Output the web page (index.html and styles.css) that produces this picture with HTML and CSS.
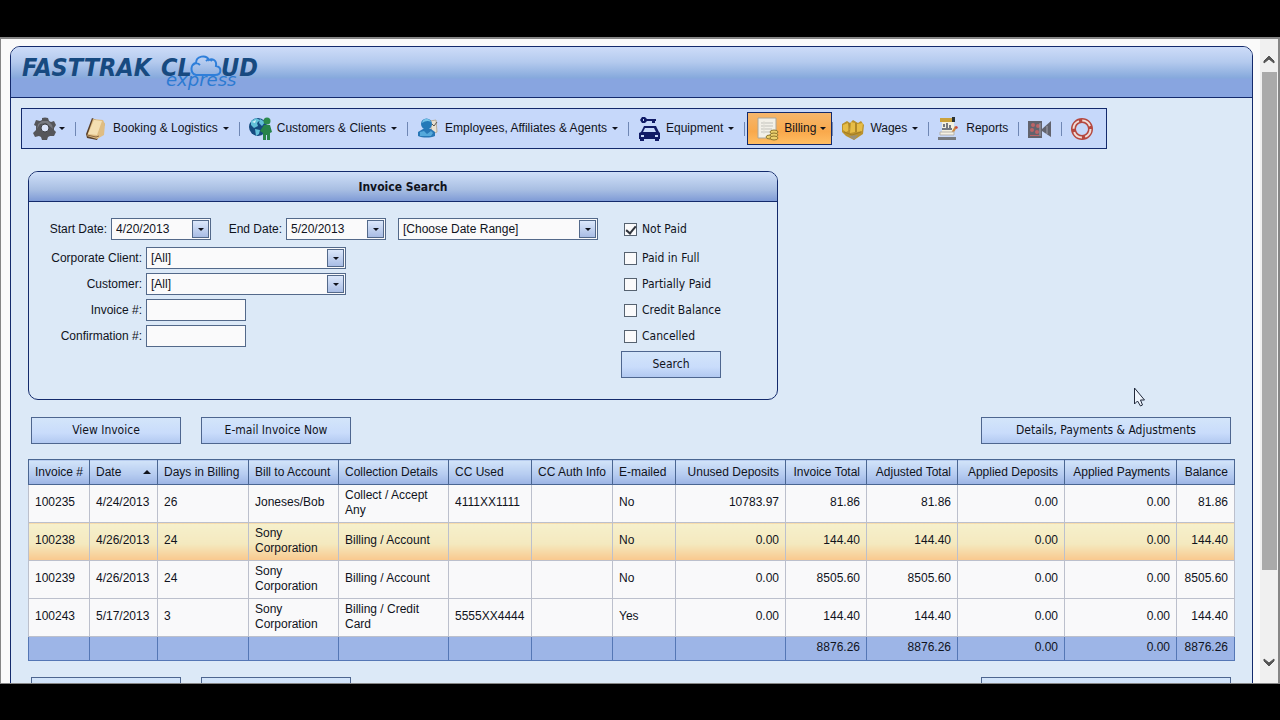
FILE: index.html
```html
<!DOCTYPE html>
<html lang="en">
<head>
<meta charset="utf-8">
<title>FastTrak Cloud Express</title>
<link rel="stylesheet" href="styles.css">
</head>
<body>
<div class="window">
<main class="viewport">
<div class="page">
<header class="banner">
<svg class="logo" width="250" height="44" viewBox="0 0 250 44" role="img" aria-label="FastTrak Cloud express">
<g class="logo-main"><text x="0" y="26">FASTTRAK</text><text x="139" y="26">CL</text><text x="199" y="26">UD</text></g>
<path class="logo-cloud" d="M177 25h16c7 0 7-8 1-9 1-6-4-8-7-6-3-6-13-4-13 3-5 0-7 10 0 12zM171 15c2-2 5-2 7 0M184 11c2-2 4-2 6 0"/>
<text class="logo-script" x="144" y="36">express</text>
</svg>
</header>
<nav class="menu">
<button class="item" aria-label="Settings"><svg class="icon" viewBox="0 0 24 24"><path fill="#55565a" d="M9 1q3-1 6 0l1 3 2 1 3-1 2 4-2 3v2l2 2-2 4-4 0-2 1-1 3H9l-1-3-2-1-4 1-2-4 3-3V9L1 8l2-5 4 1 2-1z"/><path fill="#777980" d="M9 4h6l4 4 1 4-7-6-6 1-3 5 1-5z"/><circle cx="12" cy="11" r="4" fill="#dbe4fa" stroke="#3e4044"/></svg><i class="caret"></i></button>
<button class="item"><svg class="icon" viewBox="0 0 24 24"><path fill="#59402b" d="M8 1L2 17l1 4 10 2 8-16z"/><path fill="#dfbd83" d="M9 2l10 1 2 4-1 11-7 4-10-3z"/><path fill="#f4dfb2" d="M10 3l8 1-5 14-9-1z"/><path stroke="#8d6840" fill="none" d="M3 18l9 2 3-1"/></svg><span>Booking &amp; Logistics</span><i class="caret"></i></button>
<button class="item"><svg class="icon" viewBox="0 0 24 24"><circle cx="10" cy="10" r="9" fill="#154a80"/><path fill="#62bfd8" d="M3 4l5-3 4 2-3 3 1 3-4 2-3-3zM12 2l5 3-3 4-3-3zM7 12l5 1-1 4-3 2z"/><path fill="#d5f1fa" d="M4 5l4-2-1 3z"/><circle cx="19" cy="4" r="3.500" fill="#2d8b4d"/><path fill="#27834a" d="M16 8h6l2 7-2 1v7h-3v-5h-1v5h-3v-7l-3-2z"/></svg><span>Customers &amp; Clients</span><i class="caret"></i></button>
<button class="item"><svg class="icon" viewBox="0 0 24 24"><path fill="#e8e1d2" stroke="#b8ad99" d="M14 4l6-1 1 12-5 2z"/><path stroke="#5a5752" fill="none" d="M16 7l2 2 3-4"/><path fill="#2777b6" d="M2 15l5-3h8l4 3v4c-5 2-12 2-17 0z"/><circle cx="10.500" cy="7" r="5.500" fill="#2479b8"/><path fill="#74c2e7" d="M6 6c1-6 8-5 9-1-3-2-6-1-9 1z"/><path fill="#55a9db" d="M4 15l4-1 3 3 4-3 2 2-2 3H4z"/></svg><span>Employees, Affiliates &amp; Agents</span><i class="caret"></i></button>
<button class="item"><svg class="icon" viewBox="0 0 24 24"><g fill="#101b66"><path d="M5 0h3l2 2h9v2h-1v2h-3V4h-5L8 6H5L3 3z"/><path d="M7 9h12l3 6 1 1v6h-1v2h-4v-2H7v2H3v-2H2v-6l2-1z"/></g><path fill="#c6d8fa" d="M8 11h9l2 4H6zM4 18h3v2H4zM18 18h3v2h-3zM6 2h1v2H6z"/></svg><span>Equipment</span><i class="caret"></i></button>
<button class="item active"><svg class="icon" viewBox="0 0 24 24"><path fill="#f2f0e8" stroke="#aaa69b" d="M2 1h18v20H2z"/><path stroke="#c1c1bb" d="M5 6h12M5 9h12M5 12h11M5 15h10"/><path stroke="#dfddd4" d="M8 4v13"/><g fill="#ead06c" stroke="#8f772f"><ellipse cx="14" cy="20" rx="4" ry="2"/><ellipse cx="18" cy="15" rx="4" ry="2"/><ellipse cx="18" cy="18" rx="4" ry="2"/><ellipse cx="18" cy="21" rx="4" ry="2"/></g></svg><span>Billing</span><i class="caret"></i></button>
<button class="item"><svg class="icon" viewBox="0 0 24 24"><path fill="#bb922d" d="M1 7l5-3 3 2 3-3 5 3 3-2 3 4-1 9-9 6-8-4-4-4z"/><path fill="#e7bd47" d="M2 8l5-2 2 7-4 2-3-2zM10 5l4 1v9l-5 1zM16 7l6-1-1 8-5 1z"/><path stroke="#a37d24" fill="none" d="M8 6v8M15 6v9M3 15l8 3 9-3"/><path fill="#99917a" d="M8 19l9-1-4 5z"/></svg><span>Wages</span><i class="caret"></i></button>
<button class="item"><svg class="icon" viewBox="0 0 24 24"><path fill="#f3f0df" d="M5 3h12v13H5z"/><path fill="#cba23b" d="M3 1h15v4H3z"/><path fill="#2b3335" d="M15 0h3v5h-3z"/><path stroke="#4b5263" d="M5 12h10M7 10V7M10 11V6M13 11V8" stroke-width="1.500"/><path d="M14 16l4-7 2 1-4 7-3 1z" fill="#cc873a"/><path fill="#f5f1e3" stroke="#b5b3ad" d="M3 15h14v3H3z"/><path fill="#777b80" d="M1 20h18v3H1z"/><path fill="#c8443e" d="M19 9l2 1-1 2-2-1z"/></svg><span>Reports</span></button>
<button class="item" aria-label="Video help"><svg class="icon" viewBox="0 0 24 24"><path fill="#62636d" d="M1 4h14v17H1zM15 12l9-8v16l-9-6z"/><g fill="#bc6466"><circle cx="6" cy="8" r="2"/><circle cx="11" cy="9" r="2"/><circle cx="5" cy="13" r="2"/><circle cx="10" cy="15" r="2"/><path d="M3 18h9v1H3z"/></g><path stroke="#a4a4ae" d="M13 6v13M20 9v8"/></svg></button>
<button class="item" aria-label="Help"><svg class="icon" viewBox="0 0 24 24"><circle cx="12" cy="12" r="8.500" fill="none" stroke="#b5483f" stroke-width="5"/><circle cx="12" cy="12" r="8.500" fill="none" stroke="#f0ddd8" stroke-width="2" stroke-dasharray="10 3.350"/></svg></button>
</nav>
<div class="content">
<form class="search" onsubmit="return false">
<h1>Invoice Search</h1>
<div class="search-body">
<div class="filters">
<div class="row dates">
<label for="start">Start Date:</label><div class="combo date"><input id="start" value="4/20/2013"><button class="drop" type="button" aria-label="Pick start date"></button></div>
<label for="end">End Date:</label><div class="combo date"><input id="end" value="5/20/2013"><button class="drop" type="button" aria-label="Pick end date"></button></div>
<div class="combo wide range"><select aria-label="Date range"><option>[Choose Date Range]</option></select><span class="drop"></span></div>
</div>
<div class="row"><label for="corp">Corporate Client:</label><div class="combo wide"><select id="corp"><option>[All]</option></select><span class="drop"></span></div></div>
<div class="row"><label for="cust">Customer:</label><div class="combo wide"><select id="cust"><option>[All]</option></select><span class="drop"></span></div></div>
<div class="row"><label for="inv">Invoice #:</label><div class="combo date"><input id="inv"></div></div>
<div class="row"><label for="conf">Confirmation #:</label><div class="combo date"><input id="conf"></div></div>
</div>
<div class="status">
<label class="check"><input type="checkbox" checked>Not Paid</label>
<label class="check"><input type="checkbox">Paid in Full</label>
<label class="check"><input type="checkbox">Partially Paid</label>
<label class="check"><input type="checkbox">Credit Balance</label>
<label class="check"><input type="checkbox">Cancelled</label>
<button class="btn small">Search</button>
</div>
</div>
</form>
<div class="actions"><button class="btn">View Invoice</button><button class="btn">E-mail Invoice Now</button><button class="btn large">Details, Payments &amp; Adjustments</button></div>
<table class="grid">
<colgroup><col class="w61"><col class="w68"><col class="w91"><col class="w90"><col class="w110"><col class="w83"><col class="w81"><col class="w63"><col class="w110"><col class="w81"><col class="w91"><col class="w107"><col class="w112"><col class="w58"></colgroup>
<thead><tr><th>Invoice #</th><th><span class="sorted">Date<i class="up"></i></span></th><th>Days in Billing</th><th>Bill to Account</th><th>Collection Details</th><th>CC Used</th><th>CC Auth Info</th><th>E-mailed</th><th class="num">Unused Deposits</th><th class="num">Invoice Total</th><th class="num">Adjusted Total</th><th class="num">Applied Deposits</th><th class="num">Applied Payments</th><th class="num">Balance</th></tr></thead>
<tbody>
<tr><td>100235</td><td>4/24/2013</td><td>26</td><td>Joneses/Bob</td><td>Collect / Accept Any</td><td>4111XX1111</td><td></td><td>No</td><td class="num">10783.97</td><td class="num">81.86</td><td class="num">81.86</td><td class="num">0.00</td><td class="num">0.00</td><td class="num">81.86</td></tr>
<tr class="selected"><td>100238</td><td>4/26/2013</td><td>24</td><td>Sony Corporation</td><td>Billing / Account</td><td></td><td></td><td>No</td><td class="num">0.00</td><td class="num">144.40</td><td class="num">144.40</td><td class="num">0.00</td><td class="num">0.00</td><td class="num">144.40</td></tr>
<tr><td>100239</td><td>4/26/2013</td><td>24</td><td>Sony Corporation</td><td>Billing / Account</td><td></td><td></td><td>No</td><td class="num">0.00</td><td class="num">8505.60</td><td class="num">8505.60</td><td class="num">0.00</td><td class="num">0.00</td><td class="num">8505.60</td></tr>
<tr><td>100243</td><td>5/17/2013</td><td>3</td><td>Sony Corporation</td><td>Billing / Credit Card</td><td>5555XX4444</td><td></td><td>Yes</td><td class="num">0.00</td><td class="num">144.40</td><td class="num">144.40</td><td class="num">0.00</td><td class="num">0.00</td><td class="num">144.40</td></tr>
</tbody>
<tfoot><tr><td></td><td></td><td></td><td></td><td></td><td></td><td></td><td></td><td></td><td class="num">8876.26</td><td class="num">8876.26</td><td class="num">0.00</td><td class="num">0.00</td><td class="num">8876.26</td></tr></tfoot>
</table>
<div class="actions"><button class="btn" aria-label="View Invoice"></button><button class="btn" aria-label="E-mail Invoice Now"></button><button class="btn large" aria-label="Details, Payments &amp; Adjustments"></button></div>
</div>
</div>
</main>
<div class="scrollbar">
<svg width="12" height="9" viewBox="0 0 12 9"><path d="M1 8V6l5-5 5 5v2L6 4z" fill="#555" stroke="#555"/></svg>
<div class="thumb"></div>
<svg width="12" height="9" viewBox="0 0 12 9"><path d="M1 1v2l5 5 5-5V1L6 5z" fill="#555" stroke="#555"/></svg>
</div>
</div>
<svg class="pointer" width="13" height="20" viewBox="0 0 13 20"><path d="M1.500 1v16l3-3 3 5 2-1-2-5h4z" fill="#eef4fc" stroke="#222a3c"/></svg>
</body>
</html>
```

FILE: styles.css
```css
* { box-sizing: border-box; }
body {
  margin: 0;
  height: 100vh;
  padding: 37px 0 36px;
  display: flex;
  overflow: hidden;
  background: #000;
  color: #10131c;
  font: 12px/15px "Liberation Sans", Arial, sans-serif;
}
button, input, select { font: inherit; color: inherit; margin: 0; border-radius: 0; }
.window {
  flex: 1;
  display: flex;
  min-width: 0;
  background: #fafafa;
  border: 2px solid #868686;
  border-width: 2px 2px 1px 1px;
}
.viewport { flex: 1; min-width: 0; overflow: hidden; padding: 7px 7px 0 9px; }
.page {
  border: 1px solid #132a6c;
  border-radius: 10px 10px 0 0;
  background: #dce9f7;
  overflow: hidden;
}
.banner {
  height: 51px;
  padding: 3px 0 0 11px;
  border-bottom: 1px solid #132a6c;
  background: linear-gradient(#cddcf8 0, #b4caee 30%, #86a9dc 62%, #88a5e0 64%, #88a5e0 100%);
}
.logo { display: block; overflow: visible; }
.logo-main { font: italic bold 25px "DejaVu Sans Condensed", "DejaVu Sans", sans-serif; fill: #174a80; }
.logo-script { font: italic 200 18px "DejaVu Sans", sans-serif; fill: #2c7ad2; }
.logo-cloud { fill: none; stroke: #2f7fda; stroke-width: 2; }

.menu {
  display: flex;
  align-items: center;
  width: fit-content;
  height: 41px;
  margin: 10px 0 0 10px;
  padding: 0 2px;
  border: 1px solid #132a6c;
  background: #c6d8fa;
}
.item {
  display: flex;
  align-items: center;
  gap: 5px;
  height: 33px;
  padding: 0 10px 0 9px;
  border: 0;
  background: none;
  position: relative;
  white-space: nowrap;
}
.item:first-child { gap: 2px; }
.item + .item::before {
  content: "";
  position: absolute;
  left: 0;
  top: 10px;
  height: 14px;
  border-left: 1px solid #6f87b4;
}
.item.active {
  gap: 4px;
  margin-left: 3px;
  padding: 0 5px 0 8px;
  border: 1px solid #132a6c;
  background: linear-gradient(#f5b66c, #f9a94c 60%, #ffbd63);
}
.item.active::before { left: -4px; top: 9px; }
.icon { width: 24px; height: 24px; flex: none; }
.caret, .drop::after {
  content: "";
  border: 3px solid transparent;
  border-top-color: #10131c;
  border-bottom: 0;
}

.content { padding: 22px 18px 14px 17px; }
.search {
  width: 750px;
  max-width: 100%;
  border: 1px solid #132a6c;
  border-radius: 10px;
  overflow: hidden;
}
.search h1 {
  margin: 0;
  height: 30px;
  border-bottom: 1px solid #132a6c;
  background: linear-gradient(#cfdff8, #a9bfe3 60%, #7f9bd6);
  font: bold 12px/30px "DejaVu Sans Condensed", "Noto Sans", sans-serif;
  text-align: center;
}
.search-body { display: flex; padding: 16px 0 21px; }
.filters { flex: 1; display: flex; flex-direction: column; gap: 4px; }
.row { display: flex; align-items: center; }
.row label { width: 113px; margin-right: 4px; text-align: right; white-space: nowrap; }
.row.dates { margin-bottom: 3px; }
.dates label { width: 78px; }
.dates label + .combo + label { width: 71px; }
.range { margin-left: 12px; }
.combo {
  display: flex;
  width: 100px;
  height: 22px;
  padding: 1px;
  border: 1px solid #53698a;
  background: #fafafb;
}
.combo.wide { width: 200px; }
.combo input, .combo select {
  flex: 1;
  min-width: 0;
  width: 0;
  padding: 0 0 0 3px;
  border: 0;
  outline: 0;
  background: none;
  appearance: none;
}
.drop {
  display: flex;
  align-items: center;
  justify-content: center;
  flex: none;
  width: 17px;
  padding: 0;
  border: 1px solid #53698a;
  background: linear-gradient(#dce8fb, #a9bde5);
}
.status {
  width: 156px;
  display: flex;
  flex-direction: column;
  align-items: flex-start;
  gap: 4px;
  font-family: "DejaVu Sans Condensed", "Noto Sans", sans-serif;
}
.check { display: flex; align-items: center; gap: 5px; height: 22px; padding-left: 3px; }
.check:first-child { margin-bottom: 3px; }
.check input {
  width: 13px;
  height: 13px;
  appearance: none;
  border: 1px solid #566270;
  background: #fafafb;
  display: grid;
  place-items: center;
}
.check input:checked::before {
  content: "";
  width: 4px;
  height: 8px;
  margin-bottom: 2px;
  border: solid #30343c;
  border-width: 0 2px 2px 0;
  transform: rotate(40deg);
}
.btn {
  width: 150px;
  height: 27px;
  padding: 0;
  border: 1px solid #4e668f;
  background: linear-gradient(#d3e5fa, #c9dcfb 60%, #b2c9f1);
  font-family: "DejaVu Sans Condensed", "Noto Sans", sans-serif;
}
.btn.small { width: 100px; }
.btn.large { width: 250px; margin-left: auto; }
.actions { display: flex; gap: 20px; padding: 0 3px; margin: 17px 0 15px; }

.grid {
  width: 100%;
  table-layout: fixed;
  border-collapse: collapse;
  border: 1px solid #4a6692;
  background: #f9f9fa;
}
.grid + .actions { margin: 16px 0 0; }
.w58 { width: 58px; }
.w61 { width: 61px; }
.w63 { width: 63px; }
.w68 { width: 68px; }
.w81 { width: 81px; }
.w83 { width: 83px; }
.w90 { width: 90px; }
.w91 { width: 91px; }
.w107 { width: 107px; }
.w110 { width: 110px; }
.w112 { width: 112px; }
.grid th, .grid td { padding: 0 6px; text-align: left; }
.grid th {
  height: 25px;
  border: 1px solid #4a6692;
  background: linear-gradient(#d2e4f9, #b5cbf0 60%, #9cb4e4);
  font-weight: normal;
  white-space: nowrap;
}
.grid td { height: 38px; padding-bottom: 2px; border: 1px solid #bcc0cc; }
.grid .num { text-align: right; }
.grid .selected td { background: linear-gradient(#f6f0cc, #f4e9bf 55%, #f9c88d); }
.grid tfoot td { height: 24px; border-color: #5577b5; border-top-color: #9db5e7; background: #9db5e7; }
.sorted { display: flex; align-items: center; justify-content: space-between; }
.up { border: 4px solid transparent; border-bottom-color: #10131c; border-top: 0; }

.scrollbar {
  width: 18px;
  display: flex;
  flex-direction: column;
  align-items: center;
  gap: 8px;
  padding: 16px 0;
  background: #f0f0f0;
}
.scrollbar .thumb { width: 15px; flex: 0 1 498px; margin-bottom: auto; background: #aaa; }
.pointer { position: absolute; left: 1133px; top: 387px; }
```
